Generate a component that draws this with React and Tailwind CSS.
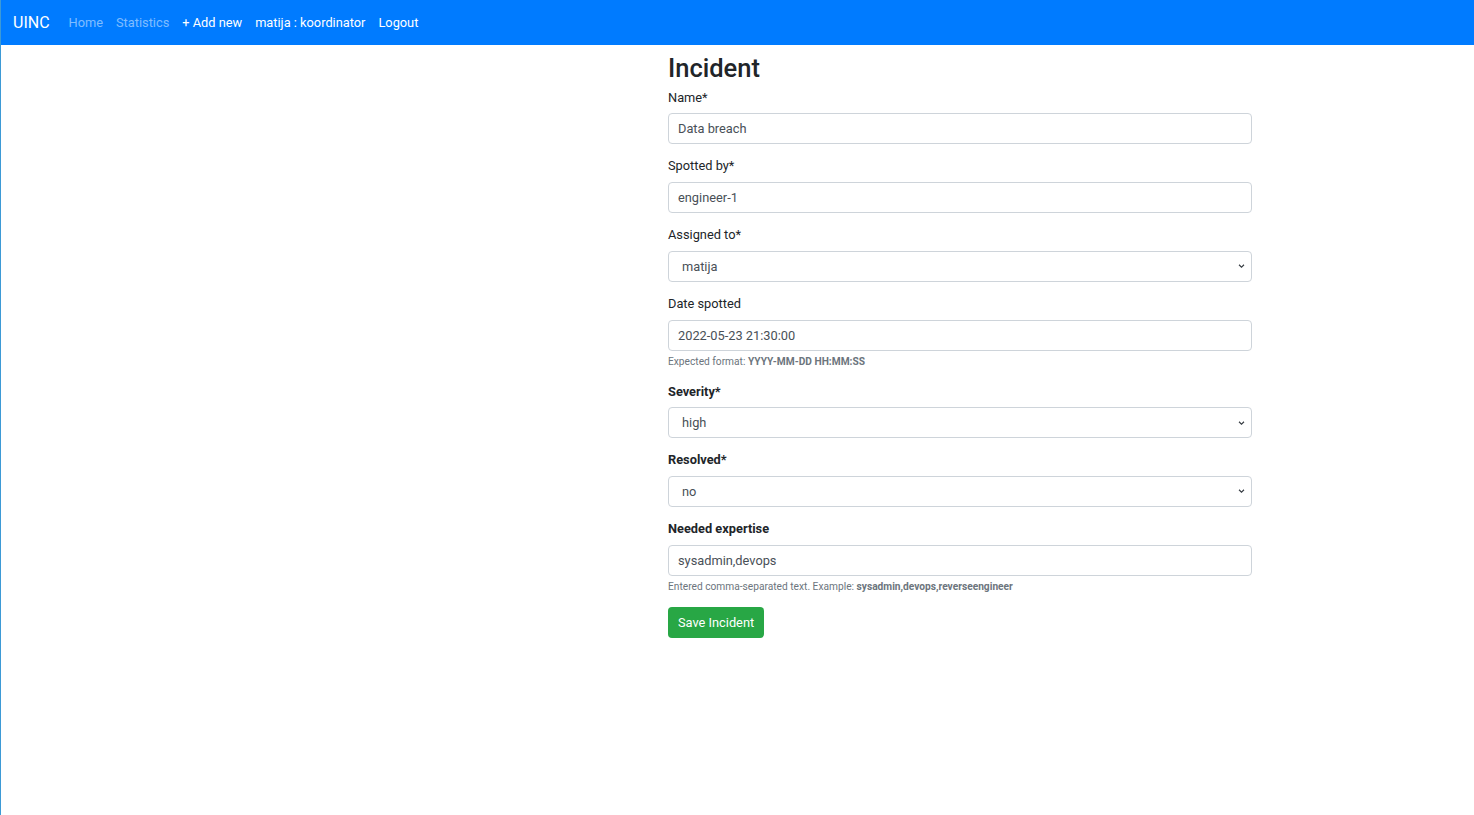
import React, { useState } from 'react';

const inputCls =
  'block w-full h-[31px] px-[9px] rounded-[4px] border border-[#ced4da] bg-white text-[12.8px] text-[#495057] outline-none';

function Field({ label, bold, help, children }) {
  return (
    <div className="mb-[12px]">
      <label className={`block h-[20.7px] leading-[20.7px] mb-[5px] text-[12.8px] text-[#212529] ${bold ? 'font-bold' : ''}`}>
        {label}
      </label>
      {children}
      {help && (
        <div className="mt-[3px] h-[16px] leading-[16px] text-[10.2px] text-[#6c757d]">{help}</div>
      )}
    </div>
  );
}

function Select({ value, onChange, options }) {
  return (
    <div className="relative">
      <select
        value={value}
        onChange={(e) => onChange(e.target.value)}
        className={`${inputCls} appearance-none pl-[13px]`}
      >
        {options.map((o) => (
          <option key={o} value={o}>{o}</option>
        ))}
      </select>
      <svg className="absolute right-[7px] top-1/2 -translate-y-1/2 pointer-events-none" width="7" height="5" viewBox="0 0 8 6">
        <path d="M1 1.5 L4 4.5 L7 1.5" fill="none" stroke="#343a40" strokeWidth="1.3" />
      </svg>
    </div>
  );
}

export default function App() {
  const [name, setName] = useState('Data breach');
  const [spottedBy, setSpottedBy] = useState('engineer-1');
  const [assigned, setAssigned] = useState('matija');
  const [date, setDate] = useState('2022-05-23 21:30:00');
  const [severity, setSeverity] = useState('high');
  const [resolved, setResolved] = useState('no');
  const [expertise, setExpertise] = useState('sysadmin,devops');

  return (
    <div className="min-h-[815px] bg-white border-l border-[#3d9ad6]" style={{ fontFamily: 'Roboto, "Liberation Sans", sans-serif' }}>
      {/* Navbar */}
      <nav className="h-[45px] bg-[#007bff] flex items-center pl-[12px]">
        <a href="#" className="text-[16px] text-white">UINC</a>
        <div className="flex items-center text-[12.8px] gap-[13px] ml-[19px]">
          <a href="#" className="text-white/50">Home</a>
          <a href="#" className="text-white/50">Statistics</a>
          <a href="#" className="text-white">+ Add new</a>
          <span className="text-white">matija : koordinator</span>
          <a href="#" className="text-white">Logout</a>
        </div>
      </nav>

      {/* Form */}
      <main className="pl-[667px]">
        <div className="w-[584px]">
          <h3 className="mt-[6px] mb-[2.8px] h-[34px] leading-[34px] text-[25.5px] font-medium text-[#212529]">Incident</h3>

          <Field label="Name*">
            <input className={inputCls} value={name} onChange={(e) => setName(e.target.value)} />
          </Field>

          <Field label="Spotted by*">
            <input className={inputCls} value={spottedBy} onChange={(e) => setSpottedBy(e.target.value)} />
          </Field>

          <Field label="Assigned to*">
            <Select value={assigned} onChange={setAssigned} options={['matija', 'engineer-1', 'engineer-2']} />
          </Field>

          <Field
            label="Date spotted"
            help={<>Expected format: <b className="font-bold">YYYY-MM-DD HH:MM:SS</b></>}
          >
            <input className={inputCls} value={date} onChange={(e) => setDate(e.target.value)} />
          </Field>

          <Field label="Severity*" bold>
            <Select value={severity} onChange={setSeverity} options={['low', 'medium', 'high']} />
          </Field>

          <Field label="Resolved*" bold>
            <Select value={resolved} onChange={setResolved} options={['no', 'yes']} />
          </Field>

          <Field
            label="Needed expertise"
            bold
            help={<>Entered comma-separated text. Example: <b className="font-bold">sysadmin,devops,reverseengineer</b></>}
          >
            <input className={inputCls} value={expertise} onChange={(e) => setExpertise(e.target.value)} />
          </Field>

          <button className="h-[31px] px-[10px] rounded-[4px] bg-[#28a745] text-white text-[12.8px]">Save Incident</button>
        </div>
      </main>
    </div>
  );
}
